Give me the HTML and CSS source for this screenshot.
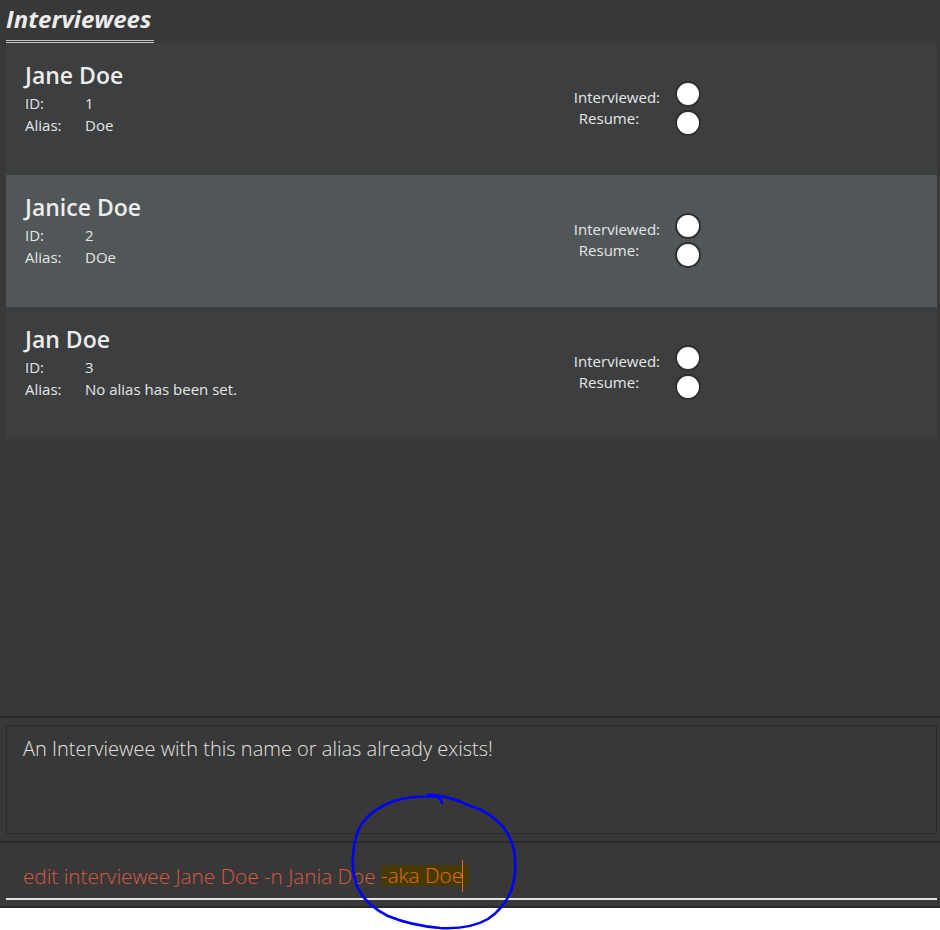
FILE: index.html
```html
<!DOCTYPE html>
<html lang="en">
<head>
<meta charset="utf-8">
<title>Interviewees</title>
<link rel="stylesheet" href="styles.css">
</head>
<body>
<div class="app">
  <section class="list-panel">
    <h1 class="title">Interviewees</h1>
    <div class="cards">
      <div class="card">
        <div class="info">
          <div class="name">Jane Doe</div>
          <div class="field"><span class="key">ID:</span><span>1</span></div>
          <div class="field"><span class="key">Alias:</span><span>Doe</span></div>
        </div>
        <div class="status">
          <div class="labels"><span class="lbl">Interviewed:</span><span class="lbl lbl-r">Resume:</span></div>
          <div class="dots"><span class="dot"></span><span class="dot"></span></div>
        </div>
      </div>
      <div class="card card-sel">
        <div class="info">
          <div class="name">Janice Doe</div>
          <div class="field"><span class="key">ID:</span><span>2</span></div>
          <div class="field"><span class="key">Alias:</span><span>DOe</span></div>
        </div>
        <div class="status">
          <div class="labels"><span class="lbl">Interviewed:</span><span class="lbl lbl-r">Resume:</span></div>
          <div class="dots"><span class="dot"></span><span class="dot"></span></div>
        </div>
      </div>
      <div class="card">
        <div class="info">
          <div class="name">Jan Doe</div>
          <div class="field"><span class="key">ID:</span><span>3</span></div>
          <div class="field"><span class="key">Alias:</span><span>No alias has been set.</span></div>
        </div>
        <div class="status">
          <div class="labels"><span class="lbl">Interviewed:</span><span class="lbl lbl-r">Resume:</span></div>
          <div class="dots"><span class="dot"></span><span class="dot"></span></div>
        </div>
      </div>
    </div>
  </section>
  <div class="sep"></div>
  <section class="result-panel">
    <div class="result-box">An Interviewee with this name or alias already exists!</div>
  </section>
  <div class="sep"></div>
  <section class="command-panel">
    <div class="command-input"><span class="cmd">edit interviewee Jane Doe -n Jania Doe </span><span class="cmd-hl">-aka Doe</span><span class="caret"></span></div>
  </section>
  <div class="sep"></div>
  <div class="footer"></div>
</div>
<svg class="scribble" width="940" height="930" viewBox="0 0 940 930" aria-hidden="true">
  <path d="M428 795 C433 794 440 796 442 803 M440 797 C425 796 407 797 394 801 C380 806 370 813 363 822 C356 831 354 842 353 856 C352 870 354 882 360 892 C366 902 376 910 388 916 C400 921 418 926 440 928 C460 929 476 926 488 919 C500 911 508 900 512 888 C516 875 516 862 514 850 C511 838 506 828 496 820 C487 812 478 808 470 806 C462 802 452 798 440 796 C434 795 430 795 427 796"
        fill="none" stroke="#0000ff" stroke-width="2.6" stroke-linecap="round" stroke-linejoin="round"/>
</svg>
</body>
</html>
```

FILE: styles.css
```css
html, body {
  margin: 0;
  padding: 0;
}
body {
  width: 940px;
  height: 930px;
  overflow: hidden;
  background: #383838;
  font-family: "Open Sans", "Noto Sans", sans-serif;
  position: relative;
}
.app {
  display: flex;
  flex-direction: column;
  height: 930px;
}
.list-panel {
  height: 716px;
  padding: 0 3px 0 6px;
  box-sizing: border-box;
}
.title {
  margin: 0;
  display: inline-block;
  font-size: 24px;
  font-weight: 700;
  font-style: italic;
  color: #ececec;
  line-height: 32px;
  padding: 3px 3px 5px 0;
  border-bottom: 3px double #c4c4c4;
  letter-spacing: 0;
}
.cards {
  display: flex;
  flex-direction: column;
}
.card {
  height: 132px;
  box-sizing: border-box;
  background: #3c3e40;
  display: flex;
  padding: 18px 236px 0 19px;
}
.card-sel {
  background: #515658;
}
.info {
  flex: 1;
  color: #e6e6e6;
}
.name {
  font-size: 23px;
  font-weight: 600;
  line-height: 28px;
  margin-bottom: 3px;
  color: #ececec;
}
.field {
  display: flex;
  font-size: 15px;
  line-height: 22px;
}
.key {
  width: 60px;
}
.status {
  display: flex;
  gap: 15px;
  padding-top: 20px;
}
.labels {
  display: flex;
  flex-direction: column;
  font-size: 15px;
  line-height: 21px;
  color: #e6e6e6;
  padding-top: 6px;
}
.lbl-r {
  padding-left: 5px;
}
.dots {
  display: flex;
  flex-direction: column;
  gap: 3px;
}
.dot {
  width: 22px;
  height: 22px;
  border-radius: 50%;
  background: #ffffff;
  border: 2px solid #2f3131;
}
.sep {
  height: 2px;
  background: #2a2a2a;
}
.result-panel {
  height: 123px;
  box-sizing: border-box;
  padding: 7px 3px 7px 6px;
}
.result-box {
  height: 100%;
  box-sizing: border-box;
  border: 1px solid #2a2a2a;
  padding: 7px 16px;
  font-size: 20px;
  font-weight: 300;
  line-height: 32px;
  color: #e2e2e2;
}
.command-panel {
  height: 63px;
  box-sizing: border-box;
  padding: 0 3px 0 6px;
}
.command-input {
  height: 57px;
  box-sizing: border-box;
  border-bottom: 2px solid #e4e4e4;
  padding: 10px 0 0 17px;
  font-size: 20.7px;
  font-weight: 300;
  line-height: 24px;
  display: flex;
  align-items: center;
  white-space: pre;
}
.cmd {
  color: #d9583f;
}
.cmd-hl {
  color: #e46a12;
  background: #473a00;
  padding-right: 6px;
  line-height: 21px;
}
.caret {
  width: 1px;
  height: 32px;
  background: #e46a12;
  margin-left: -7px;
}
.footer {
  flex: 1;
  background: #ffffff;
}
.scribble {
  position: absolute;
  left: 0;
  top: 0;
  pointer-events: none;
}
```
